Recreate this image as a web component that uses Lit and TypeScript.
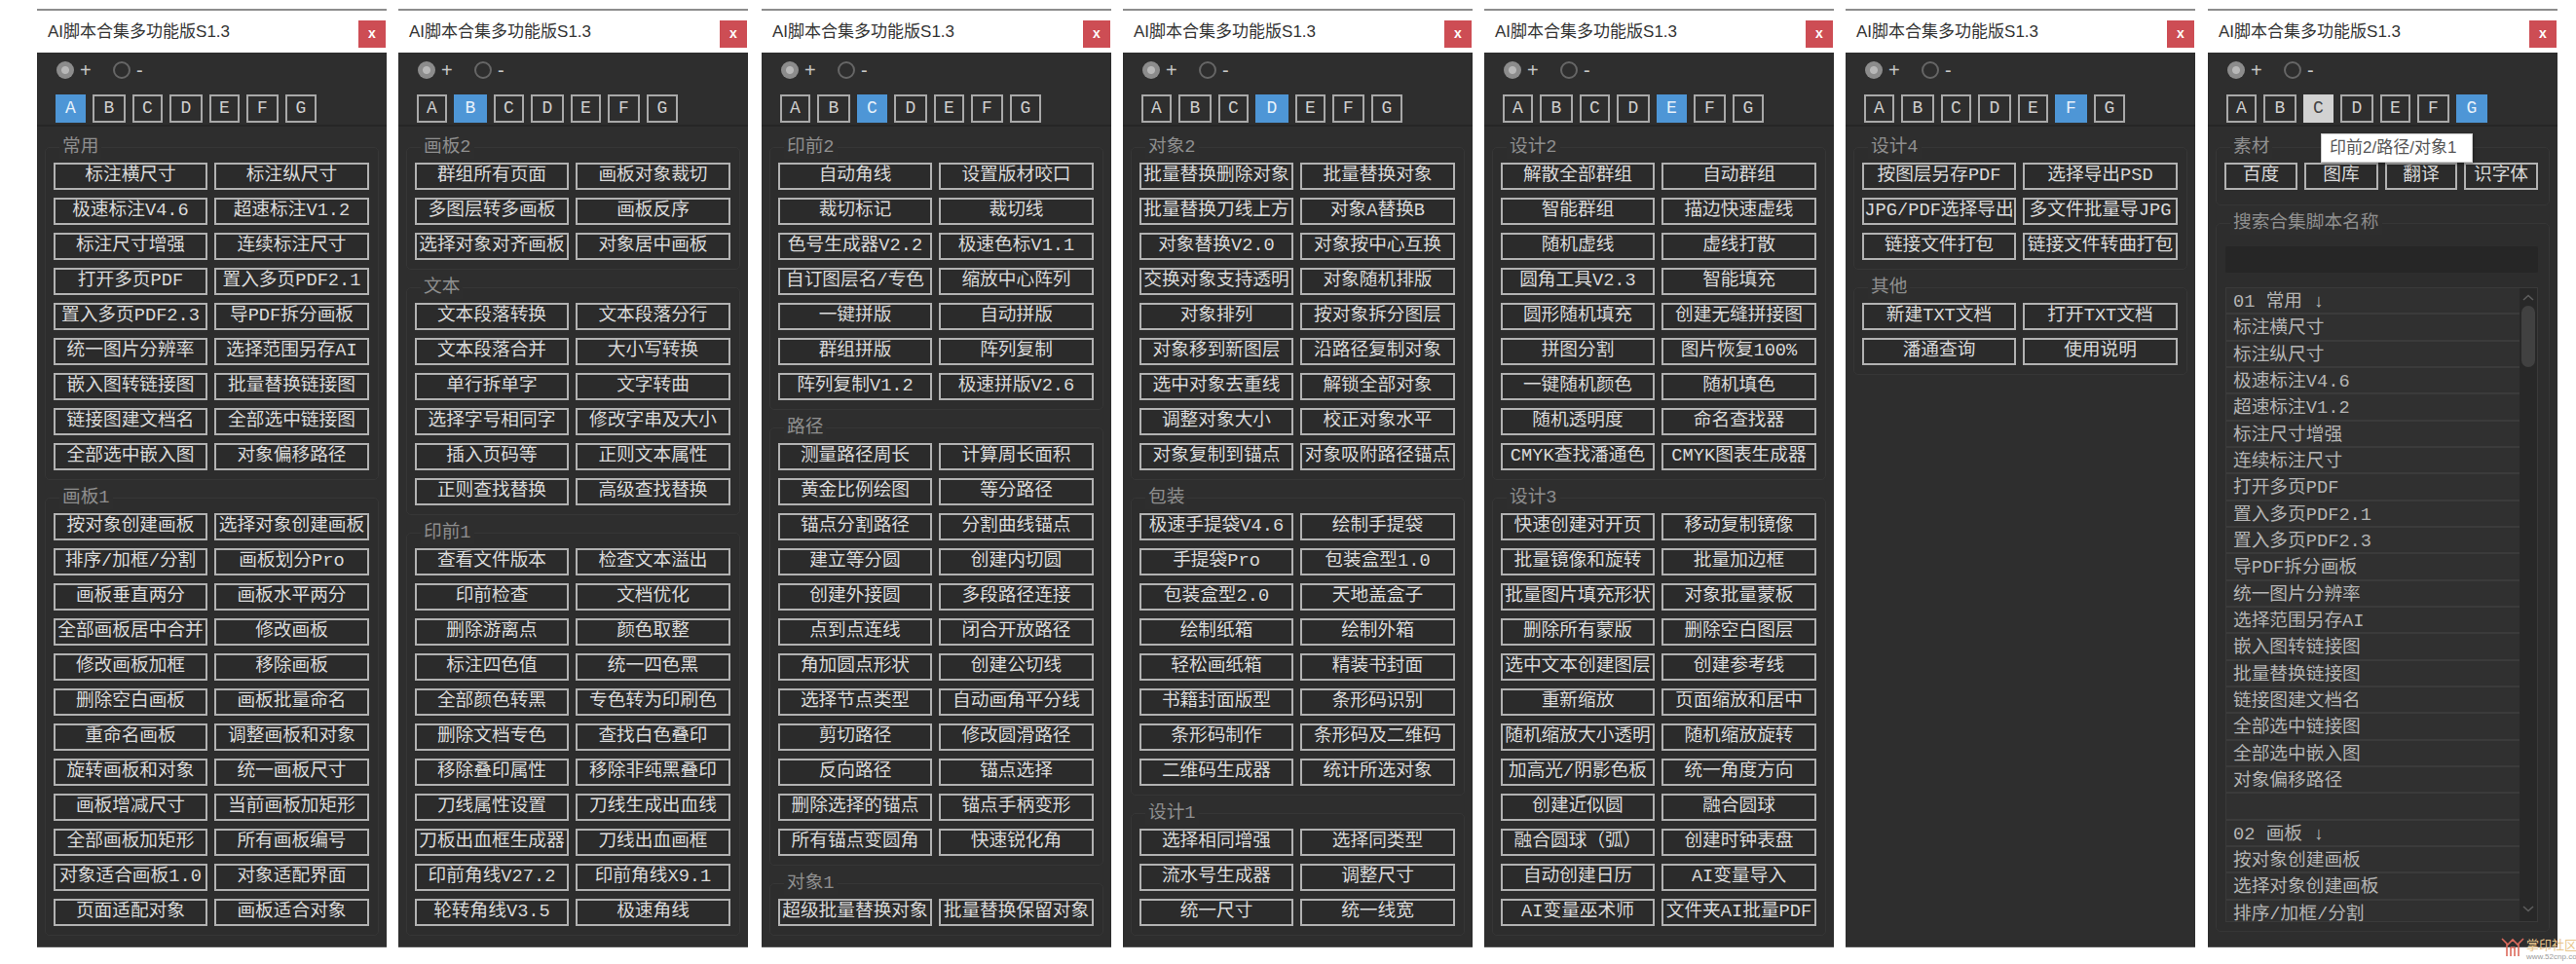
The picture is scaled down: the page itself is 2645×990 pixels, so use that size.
import { LitElement, html, css, svg } from "lit";
import { customElement } from "lit/decorators.js";

type Group = { title: string; items: string[] };
type Panel = { active: number; groups: Group[] };

const TABS = ["A", "B", "C", "D", "E", "F", "G"];

const A1 = ["标注横尺寸","标注纵尺寸","极速标注V4.6","超速标注V1.2","标注尺寸增强","连续标注尺寸","打开多页PDF","置入多页PDF2.1","置入多页PDF2.3","导PDF拆分画板","统一图片分辨率","选择范围另存AI","嵌入图转链接图","批量替换链接图","链接图建文档名","全部选中链接图","全部选中嵌入图","对象偏移路径"];
const A2 = ["按对象创建画板","选择对象创建画板","排序/加框/分割","画板划分Pro","画板垂直两分","画板水平两分","全部画板居中合并","修改画板","修改画板加框","移除画板","删除空白画板","画板批量命名","重命名画板","调整画板和对象","旋转画板和对象","统一画板尺寸","画板增减尺寸","当前画板加矩形","全部画板加矩形","所有画板编号","对象适合画板1.0","对象适配界面","页面适配对象","画板适合对象"];

const PANELS: Panel[] = [
  { active: 0, groups: [{ title: "常用", items: A1 }, { title: "画板1", items: A2 }] },
  { active: 1, groups: [
    { title: "画板2", items: ["群组所有页面","画板对象裁切","多图层转多画板","画板反序","选择对象对齐画板","对象居中画板"] },
    { title: "文本", items: ["文本段落转换","文本段落分行","文本段落合并","大小写转换","单行拆单字","文字转曲","选择字号相同字","修改字串及大小","插入页码等","正则文本属性","正则查找替换","高级查找替换"] },
    { title: "印前1", items: ["查看文件版本","检查文本溢出","印前检查","文档优化","删除游离点","颜色取整","标注四色值","统一四色黑","全部颜色转黑","专色转为印刷色","删除文档专色","查找白色叠印","移除叠印属性","移除非纯黑叠印","刀线属性设置","刀线生成出血线","刀板出血框生成器","刀线出血画框","印前角线V27.2","印前角线X9.1","轮转角线V3.5","极速角线"] },
  ] },
  { active: 2, groups: [
    { title: "印前2", items: ["自动角线","设置版材咬口","裁切标记","裁切线","色号生成器V2.2","极速色标V1.1","自订图层名/专色","缩放中心阵列","一键拼版","自动拼版","群组拼版","阵列复制","阵列复制V1.2","极速拼版V2.6"] },
    { title: "路径", items: ["测量路径周长","计算周长面积","黄金比例绘图","等分路径","锚点分割路径","分割曲线锚点","建立等分圆","创建内切圆","创建外接圆","多段路径连接","点到点连线","闭合开放路径","角加圆点形状","创建公切线","选择节点类型","自动画角平分线","剪切路径","修改圆滑路径","反向路径","锚点选择","删除选择的锚点","锚点手柄变形","所有锚点变圆角","快速锐化角"] },
    { title: "对象1", items: ["超级批量替换对象","批量替换保留对象"] },
  ] },
  { active: 3, groups: [
    { title: "对象2", items: ["批量替换删除对象","批量替换对象","批量替换刀线上方","对象A替换B","对象替换V2.0","对象按中心互换","交换对象支持透明","对象随机排版","对象排列","按对象拆分图层","对象移到新图层","沿路径复制对象","选中对象去重线","解锁全部对象","调整对象大小","校正对象水平","对象复制到锚点","对象吸附路径锚点"] },
    { title: "包装", items: ["极速手提袋V4.6","绘制手提袋","手提袋Pro","包装盒型1.0","包装盒型2.0","天地盖盒子","绘制纸箱","绘制外箱","轻松画纸箱","精装书封面","书籍封面版型","条形码识别","条形码制作","条形码及二维码","二维码生成器","统计所选对象"] },
    { title: "设计1", items: ["选择相同增强","选择同类型","流水号生成器","调整尺寸","统一尺寸","统一线宽"] },
  ] },
  { active: 4, groups: [
    { title: "设计2", items: ["解散全部群组","自动群组","智能群组","描边快速虚线","随机虚线","虚线打散","圆角工具V2.3","智能填充","圆形随机填充","创建无缝拼接图","拼图分割","图片恢复100%","一键随机颜色","随机填色","随机透明度","命名查找器","CMYK查找潘通色","CMYK图表生成器"] },
    { title: "设计3", items: ["快速创建对开页","移动复制镜像","批量镜像和旋转","批量加边框","批量图片填充形状","对象批量蒙板","删除所有蒙版","删除空白图层","选中文本创建图层","创建参考线","重新缩放","页面缩放和居中","随机缩放大小透明","随机缩放旋转","加高光/阴影色板","统一角度方向","创建近似圆","融合圆球","融合圆球（弧）","创建时钟表盘","自动创建日历","AI变量导入","AI变量巫术师","文件夹AI批量PDF"] },
  ] },
  { active: 5, groups: [
    { title: "设计4", items: ["按图层另存PDF","选择导出PSD","JPG/PDF选择导出","多文件批量导JPG","链接文件打包","链接文件转曲打包"] },
    { title: "其他", items: ["新建TXT文档","打开TXT文档","潘通查询","使用说明"] },
  ] },
];

const LIST = ["01 常用 ↓", ...A1, "", "02 画板 ↓", "按对象创建画板", "选择对象创建画板", "排序/加框/分割"];

const chevron = (d: string) => html`<svg class="chev" width="14" height="8" viewBox="0 0 14 8"><path d=${d} fill="none" stroke="#5e5e5e" stroke-width="1.6"/></svg>`;

@customElement("app-root")
export class AppRoot extends LitElement {
  static styles = css`
    :host { display: block; width: 2645px; height: 990px; background: #fff; position: relative; overflow: hidden;
      font-family: "Liberation Mono", "Noto Sans CJK SC", monospace; }
    .desk { display: flex; gap: 12px; padding: 9px 0 0 38px; }
    .window { width: 359px; flex: none; display: flex; flex-direction: column; }
    .window:nth-child(3) { margin-left: 2px; }
    .window:nth-child(7) { margin-left: 1px; }
    .titlebar { height: 45px; border-top: 2px solid #8d8d8d; display: flex; align-items: flex-start; justify-content: space-between; padding: 10px 1px 0 11px; box-sizing: border-box; }
    .title { font: 17px/24px "Liberation Sans", "Noto Sans CJK SC", sans-serif; color: #333; }
    .close { width: 28px; height: 28px; background: #cd4d54; color: #fff; font: bold 14px/26px "Liberation Sans", sans-serif; text-align: center; }
    .panel { height: 919px; background: #2e2e2e; box-sizing: border-box; position: relative; border-bottom: 1px solid #555; }
    .radios { display: flex; align-items: center; height: 18px; padding: 9px 0 0 20px; box-sizing: content-box; color: #c8c8c8; font: 20px/18px "Liberation Sans", sans-serif; }
    .radio { width: 18px; height: 18px; border-radius: 50%; box-sizing: border-box; flex: none; }
    .radio.on { background: radial-gradient(circle, #b8b8b8 0 3.5px, #8c8c8c 4.5px); }
    .radio.off { border: 2px solid #666; margin-left: 20px; }
    .sign { margin-left: 6px; width: 14px; }
    .tabs { display: flex; gap: 7px; padding: 16px 0 2px 19px; border-bottom: 2px solid #262626; }
    .tab { height: 29px; box-sizing: border-box; border: 2px solid #a9a9a9; color: #cfcfcf; font-size: 18px; line-height: 25px; text-align: center; }
    .tab:nth-child(1), .tab:nth-child(3), .tab:nth-child(5) { width: 31px; }
    .tab:nth-child(2), .tab:nth-child(4) { width: 34px; }
    .tab:nth-child(6) { width: 33px; }
    .tab:nth-child(7) { width: 32px; }
    .tab.active { background: #4e96d6; border-color: #4e96d6; color: #e8f2fb; }
    .tab.hover { background: #d2d2d2; border-color: #d2d2d2; color: #444; }
    .groups { padding: 21px 8px 0; display: flex; flex-direction: column; gap: 18px; }
    .group { position: relative; border: 1px solid #363636; border-radius: 5px; padding: 15px 8px 9px; background: #2d2d2d; }
    .label { position: absolute; left: 14px; top: -13px; padding: 0 3px; line-height: 24px; background: #2e2e2e; color: #8f8f8f; font-size: 18.7px; }
    .grid { display: grid; grid-template-columns: 158px 159px; column-gap: 7px; row-gap: 8px; }
    .btn { height: 28px; box-sizing: border-box; border: 2px solid #b2b2b2; background: #2b2b2b; color: #dadada; font-size: 18.7px; line-height: 23px; text-align: center; white-space: nowrap; }
    .quick { display: grid; grid-template-columns: 75px 76px 74px 76px; column-gap: 7px; margin-left: 0; }
    .material { height: 60px; box-sizing: border-box; }
    .search { height: 728px; box-sizing: border-box; padding: 23px 11px 0 9px; }
    .input { height: 27px; background: #262626; border-radius: 2px; }
    .list { margin-top: 15px; height: 652px; border: 1px solid #3a3a3a; display: flex; overflow: hidden; box-sizing: border-box; }
    .rows { flex: 1; min-width: 0; }
    .row { height: 27.33px; box-sizing: border-box; border-bottom: 2px solid #3b3b3b; background: #303030; color: #b4b4b4; font-size: 18.7px; line-height: 28px; padding-left: 7px; white-space: nowrap; }
    .track { width: 18px; flex: none; background: #282828; display: flex; flex-direction: column; align-items: center; position: relative; }
    .chev { flex: none; margin-top: 6px; }
    .thumb { width: 14px; height: 63px; background: #414141; border-radius: 7px; margin-top: 4px; }
    .down { position: absolute; bottom: 4px; left: 2px; margin: 0; }
    .tip { position: absolute; left: 116px; top: 83px; width: 156px; height: 30px; box-sizing: border-box; background: #fff; border: 1px solid #ccc; box-shadow: 1px 2px 3px rgba(0,0,0,.3); color: #555; font: 17px/28px "Liberation Sans", "Noto Sans CJK SC", sans-serif; padding-left: 8px; white-space: nowrap; z-index: 2; }
    .mark { position: absolute; left: 2568px; top: 962px; display: flex; gap: 2px; align-items: flex-start; }
    .mark-text { display: flex; flex-direction: column; }
    .mark-cn { font: 13px/16px "Noto Sans CJK SC", sans-serif; color: #e8c48a; }
    .mark-url { font: 8px/9px "Liberation Sans", sans-serif; color: #999; }
  `;

  private head(active: number, hover = -1) {
    return html`
      <div class="radios">
        <div class="radio on"></div><span class="sign">+</span>
        <div class="radio off"></div><span class="sign">-</span>
      </div>
      <div class="tabs">
        ${TABS.map((t, i) => html`<div class="tab ${i === active ? "active" : ""} ${i === hover ? "hover" : ""}">${t}</div>`)}
      </div>`;
  }

  private win(body: unknown) {
    return html`<div class="window">
      <div class="titlebar"><span class="title">AI脚本合集多功能版S1.3</span><div class="close">x</div></div>
      <div class="panel">${body}</div>
    </div>`;
  }

  private panel(p: Panel) {
    return this.win(html`${this.head(p.active)}
      <div class="groups">
        ${p.groups.map((g) => html`<div class="group">
          <div class="label">${g.title}</div>
          <div class="grid">${g.items.map((t) => html`<div class="btn">${t}</div>`)}</div>
        </div>`)}
      </div>`);
  }

  private lastPanel() {
    return this.win(html`${this.head(6, 2)}
      <div class="tip">印前2/路径/对象1</div>
      <div class="groups">
        <div class="group material">
          <div class="label">素材</div>
          <div class="quick">${["百度", "图库", "翻译", "识字体"].map((t) => html`<div class="btn">${t}</div>`)}</div>
        </div>
        <div class="group search">
          <div class="label">搜索合集脚本名称</div>
          <div class="input"></div>
          <div class="list">
            <div class="rows">${LIST.map((t) => html`<div class="row">${t}</div>`)}</div>
            <div class="track">
              ${chevron("M2 6 L7 1.5 L12 6")}
              <div class="thumb"></div>
              <div class="down">${chevron("M2 2 L7 6.5 L12 2")}</div>
            </div>
          </div>
        </div>
      </div>`);
  }

  render() {
    return html`
      <div class="desk">${PANELS.map((p) => this.panel(p))}${this.lastPanel()}</div>
      <div class="mark">
        <svg width="24" height="22" viewBox="0 0 24 22">${svg`<path d="M1 2 L7 8 L12 3 L17 8 L23 2 M6 7 V20 M18 7 V20 M10 11 H14 M10 11 V20 M14 11 V20" fill="none" stroke="#dc6a5c" stroke-width="1.6"/>`}</svg>
        <div class="mark-text"><span class="mark-cn">掌印社区</span><span class="mark-url">www.52cnp.com</span></div>
      </div>`;
  }
}
